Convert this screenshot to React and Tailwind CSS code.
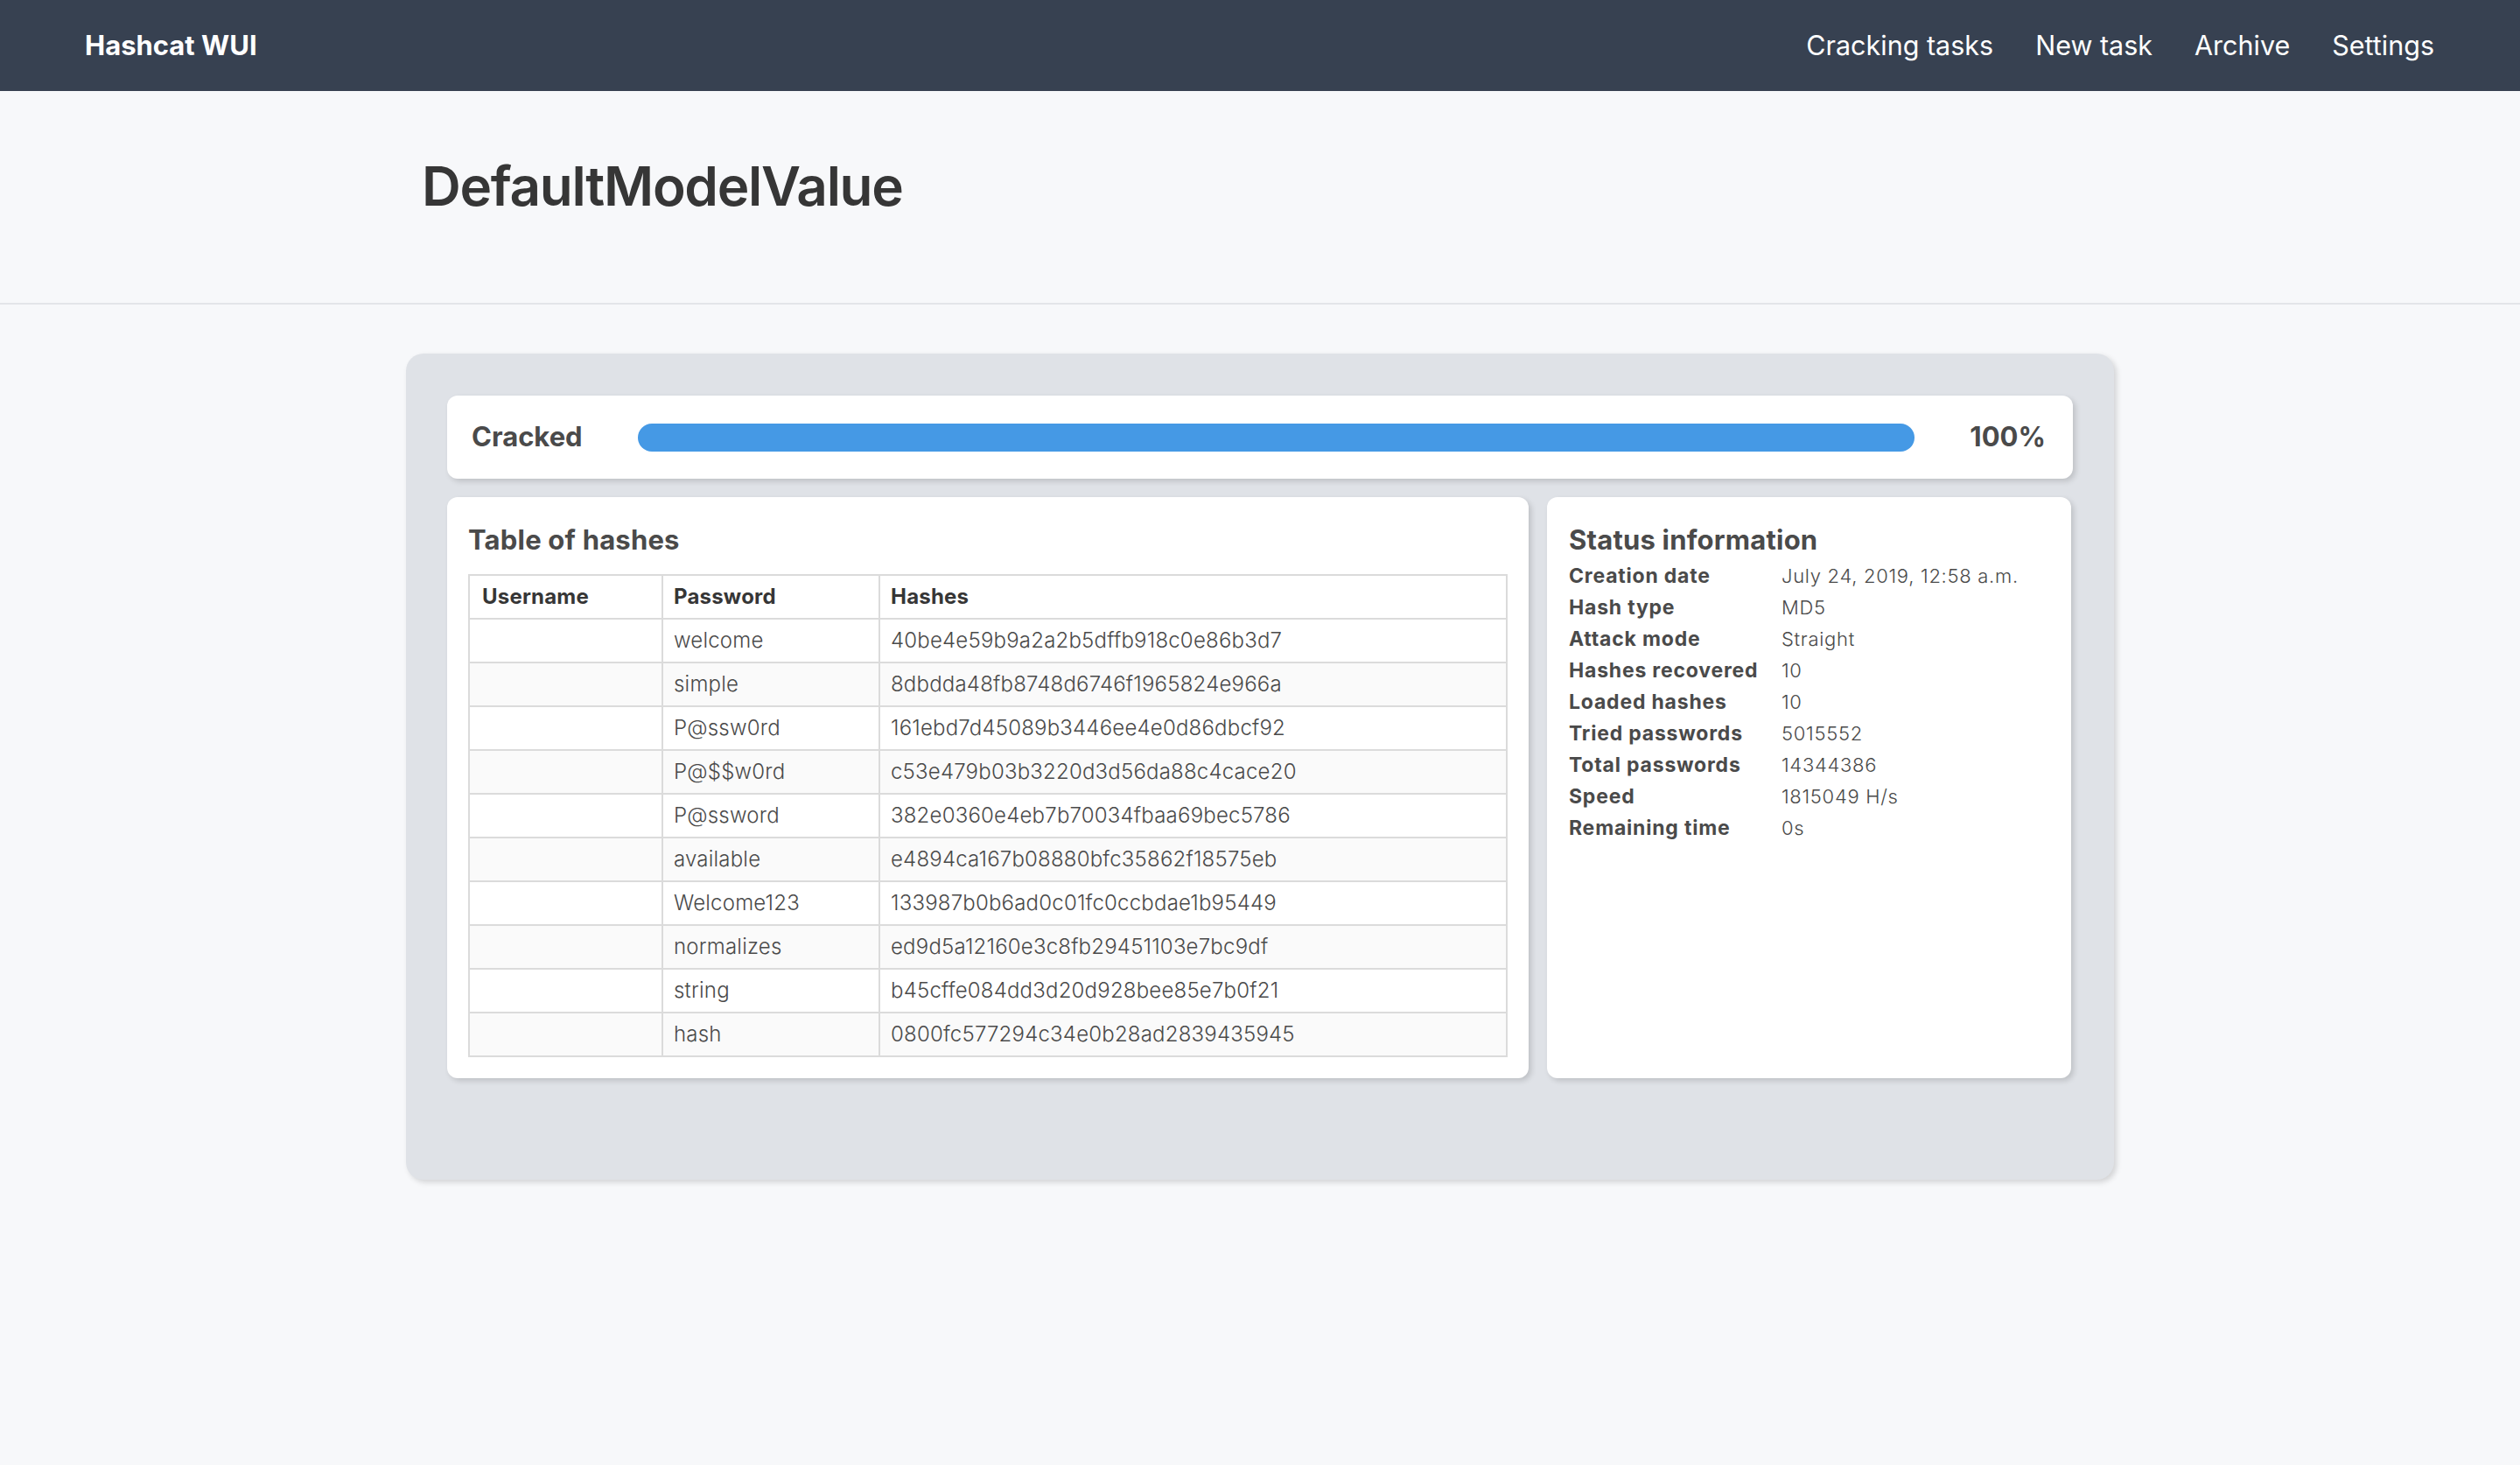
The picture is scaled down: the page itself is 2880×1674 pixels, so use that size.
import React from "react";

const rows = [
  ["", "welcome", "40be4e59b9a2a2b5dffb918c0e86b3d7"],
  ["", "simple", "8dbdda48fb8748d6746f1965824e966a"],
  ["", "P@ssw0rd", "161ebd7d45089b3446ee4e0d86dbcf92"],
  ["", "P@$$w0rd", "c53e479b03b3220d3d56da88c4cace20"],
  ["", "P@ssword", "382e0360e4eb7b70034fbaa69bec5786"],
  ["", "available", "e4894ca167b08880bfc35862f18575eb"],
  ["", "Welcome123", "133987b0b6ad0c01fc0ccbdae1b95449"],
  ["", "normalizes", "ed9d5a12160e3c8fb29451103e7bc9df"],
  ["", "string", "b45cffe084dd3d20d928bee85e7b0f21"],
  ["", "hash", "0800fc577294c34e0b28ad2839435945"],
];

const status = [
  ["Creation date", "July 24, 2019, 12:58 a.m."],
  ["Hash type", "MD5"],
  ["Attack mode", "Straight"],
  ["Hashes recovered", "10"],
  ["Loaded hashes", "10"],
  ["Tried passwords", "5015552"],
  ["Total passwords", "14344386"],
  ["Speed", "1815049 H/s"],
  ["Remaining time", "0s"],
];

export default function App() {
  return (
    <div className="min-h-screen bg-[#f7f8fa] font-['Inter',sans-serif] text-[#4a4a4a]">
      <nav className="h-[104px] bg-[#374151] flex items-center justify-between pl-[97px] pr-[98px]">
        <span className="text-[31px] font-bold text-white">Hashcat WUI</span>
        <div className="flex gap-[48px] text-[30.5px] text-white">
          <span>Cracking tasks</span>
          <span>New task</span>
          <span>Archive</span>
          <span>Settings</span>
        </div>
      </nav>
      <header className="pt-[72px] pb-[96px] border-b-2 border-[#e3e5e9]">
        <div className="w-[1952px] mx-auto pl-[18px]">
          <h1 className="text-[62px] leading-[74px] font-semibold tracking-[-1.3px] text-[#363636]">DefaultModelValue</h1>
        </div>
      </header>
      <main className="w-[1952px] mx-auto mt-[56px] rounded-[20px] bg-[#dfe2e7] px-[47px] pt-[48px] pb-[116px] shadow-[3px_3px_6px_rgba(0,0,0,0.15)]">
        <div className="h-[95px] rounded-[12px] bg-white shadow-[3px_3px_6px_rgba(0,0,0,0.15)] flex items-center pl-[28px] pr-[31px]">
          <span className="w-[190px] text-[31px] font-bold text-[#4a4a4a]">Cracked</span>
          <div className="flex-1 h-[32px] rounded-full bg-[#4599e5]" />
          <span className="w-[150px] text-right text-[31px] font-bold text-[#4a4a4a]">100%</span>
        </div>
        <div className="mt-[21px] flex gap-[21px]">
          <section className="w-[1236px] h-[664px] rounded-[12px] bg-white shadow-[3px_3px_6px_rgba(0,0,0,0.15)] px-[24px] pt-[30px]">
            <h2 className="text-[31px] leading-[38px] font-bold tracking-[0.2px] text-[#4a4a4a] mb-[20px]">Table of hashes</h2>
            <table className="w-full border-collapse border-2 border-[#dbdbdb] text-[24px] tracking-[0.2px]">
              <thead>
                <tr className="h-[50px]">
                  <th className="w-[221px] border-2 border-[#dbdbdb] px-[14px] text-left font-bold text-[#363636]">Username</th>
                  <th className="w-[248px] border-2 border-[#dbdbdb] px-[12px] text-left font-bold text-[#363636]">Password</th>
                  <th className="border-2 border-[#dbdbdb] px-[12px] text-left font-bold text-[#363636]">Hashes</th>
                </tr>
              </thead>
              <tbody>
                {rows.map((r, i) => (
                  <tr key={i} className={`h-[50px] ${i % 2 === 1 ? "bg-[#fafafa]" : "bg-white"}`}>
                    <td className="border-2 border-[#dbdbdb] px-[14px] font-light">{r[0]}</td>
                    <td className="border-2 border-[#dbdbdb] px-[12px] font-light">{r[1]}</td>
                    <td className="border-2 border-[#dbdbdb] px-[12px] font-light">{r[2]}</td>
                  </tr>
                ))}
              </tbody>
            </table>
          </section>
          <section className="w-[599px] h-[664px] rounded-[12px] bg-white shadow-[3px_3px_6px_rgba(0,0,0,0.15)] px-[25px] pt-[30px]">
            <h2 className="text-[31px] leading-[38px] font-bold tracking-[0.2px] text-[#4a4a4a] mb-[4px]">Status information</h2>
            <div className="flex flex-col">
              {status.map(([k, v]) => (
                <div key={k} className="flex h-[36px] items-center">
                  <span className="w-[243px] shrink-0 text-[23px] font-bold tracking-[0.8px] text-[#4a4a4a]">{k}</span>
                  <span className="text-[22px] font-light tracking-[0.7px] text-[#4a4a4a]">{v}</span>
                </div>
              ))}
            </div>
          </section>
        </div>
      </main>
    </div>
  );
}
